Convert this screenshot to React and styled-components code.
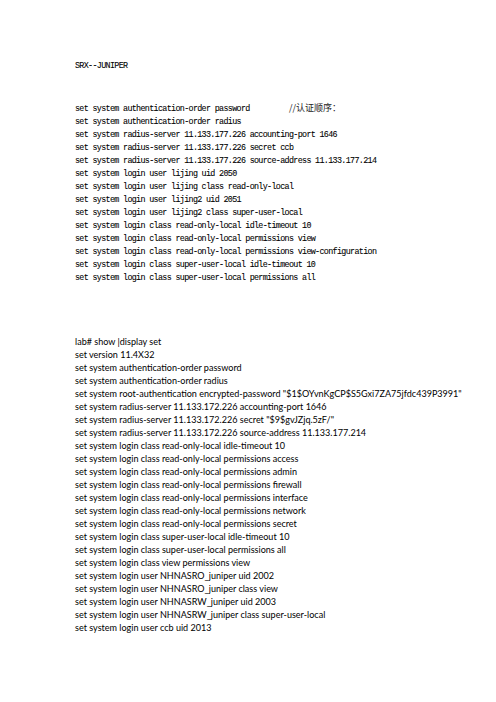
import styled, { createGlobalStyle } from 'styled-components'

const GlobalStyle = createGlobalStyle`
    html, body {
        margin: 0;
        padding: 0;
        background: #ffffff;
    }
`

const Page = styled.div`
    width: 496px;
    min-height: 702px;
    box-sizing: border-box;
    padding: 60px 0 0 75px;
    background: #ffffff;
    color: #000000;
`

const MonoBlock = styled.div`
    font-family: "Liberation Mono", "Noto Sans CJK SC", monospace;
    font-size: 8.4px;
    letter-spacing: -0.66px;
    line-height: 13px;
    margin-top: ${p => p.$gap || 0}px;
    -webkit-text-stroke: 0.08px #000;
`

const MonoLine = styled.div`
    white-space: pre;
`

const Note = styled.span`
    font-family: "Noto Sans CJK SC", "Liberation Serif", serif;
    font-size: 9px;
    letter-spacing: 0;
    -webkit-text-stroke: 0;
    color: #222222;
`

const SansBlock = styled.div`
    font-family: "Lato", "Liberation Sans", sans-serif;
    font-size: 9.05px;
    line-height: 13px;
    margin-top: 50px;
`

const SansLine = styled.div`
    white-space: pre;
`

const junosLines = [
    'set system authentication-order radius',
    'set system radius-server 11.133.177.226 accounting-port 1646',
    'set system radius-server 11.133.177.226 secret ccb',
    'set system radius-server 11.133.177.226 source-address 11.133.177.214',
    'set system login user lijing uid 2050',
    'set system login user lijing class read-only-local',
    'set system login user lijing2 uid 2051',
    'set system login user lijing2 class super-user-local',
    'set system login class read-only-local idle-timeout 10',
    'set system login class read-only-local permissions view',
    'set system login class read-only-local permissions view-configuration',
    'set system login class super-user-local idle-timeout 10',
    'set system login class super-user-local permissions all',
]

const displayLines = [
    'lab# show |display set',
    'set version 11.4X32',
    'set system authentication-order password',
    'set system authentication-order radius',
    'set system root-authentication encrypted-password "$1$OYvnKgCP$S5Gxi7ZA75jfdc439P3991"',
    'set system radius-server 11.133.172.226 accounting-port 1646',
    'set system radius-server 11.133.172.226 secret "$9$gvJZjq.5zF/"',
    'set system radius-server 11.133.172.226 source-address 11.133.177.214',
    'set system login class read-only-local idle-timeout 10',
    'set system login class read-only-local permissions access',
    'set system login class read-only-local permissions admin',
    'set system login class read-only-local permissions firewall',
    'set system login class read-only-local permissions interface',
    'set system login class read-only-local permissions network',
    'set system login class read-only-local permissions secret',
    'set system login class super-user-local idle-timeout 10',
    'set system login class super-user-local permissions all',
    'set system login class view permissions view',
    'set system login user NHNASRO_juniper uid 2002',
    'set system login user NHNASRO_juniper class view',
    'set system login user NHNASRW_juniper uid 2003',
    'set system login user NHNASRW_juniper class super-user-local',
    'set system login user ccb uid 2013',
]

const App = () => {
    return (
        <>
            <GlobalStyle />
            <Page>
                <MonoBlock>
                    <MonoLine>SRX--JUNIPER</MonoLine>
                </MonoBlock>
                <MonoBlock $gap={28}>
                    <MonoLine>
                        {'set system authentication-order password         '}
                        <Note>//认证顺序：</Note>
                    </MonoLine>
                    {junosLines.map((line, i) => (
                        <MonoLine key={i}>{line}</MonoLine>
                    ))}
                </MonoBlock>
                <SansBlock>
                    {displayLines.map((line, i) => (
                        <SansLine key={i}>{line}</SansLine>
                    ))}
                </SansBlock>
            </Page>
        </>
    )
}

export default App
